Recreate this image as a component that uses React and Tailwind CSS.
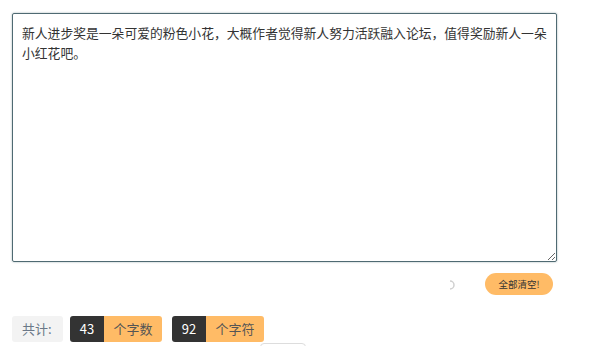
import { useState } from 'react';

const TEXT = '新人进步奖是一朵可爱的粉色小花，大概作者觉得新人努力活跃融入论坛，值得奖励新人一朵小红花吧。';

function Badge({ num, label }) {
  return (
    <div className="flex h-[26px] rounded-[3px] overflow-hidden text-[13px]">
      <span className="flex items-center justify-center w-[34px] bg-[#333333] text-white">{num}</span>
      <span className="flex items-center justify-center w-[58px] bg-[#ffbb66] text-[#555]">{label}</span>
    </div>
  );
}

export default function App() {
  const [text, setText] = useState(TEXT);

  return (
    <div className="w-[600px] h-[346px] overflow-hidden bg-white px-[12px] pt-[13px] font-['Microsoft_YaHei','Noto_Sans_CJK_SC',sans-serif]">
      <textarea
        className="block w-[545px] h-[249px] border border-[#4f6a72] rounded-[2px] shadow-[0_0_2px_rgba(79,106,114,0.6)] pl-[9px] pr-[2px] py-[9px] text-[12.8px] leading-[20px] text-[#333] outline-none resize"
        value={text}
        onChange={(e) => setText(e.target.value)}
      />
      <div className="flex items-center justify-end w-[541px] mt-[11px] gap-[30px]">
        <svg width="10" height="10" viewBox="0 0 10 10" className="mt-[2px]">
          <path d="M5 1 A4 4 0 0 1 5 9" fill="none" stroke="#d0d0d0" strokeWidth="1.5" />
        </svg>
        <button className="h-[22px] w-[68px] rounded-full bg-[#ffbb66] text-[9.5px] text-[#333]">全部清空!</button>
      </div>
      <div className="flex items-center mt-[21px]">
        <span className="flex items-center w-[51px] h-[26px] pl-[10px] bg-[#f3f3f3] rounded-[3px] text-[13px] text-[#6b7888]">共计:</span>
        <div className="ml-[7px]">
          <Badge num={43} label="个字数" />
        </div>
        <div className="ml-[10px]">
          <Badge num={92} label="个字符" />
        </div>
      </div>
      <div className="ml-[248px] mt-[1px] w-[46px] h-[10px] border border-[#ddd] rounded-t-[4px]" />
    </div>
  );
}
